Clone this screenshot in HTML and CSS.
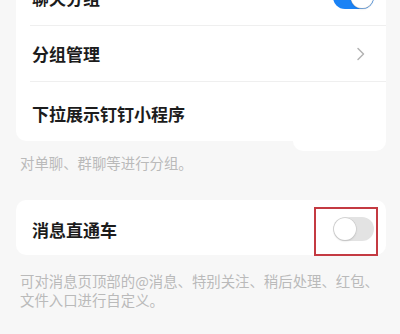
FILE: index.html
```html
<!DOCTYPE html>
<html lang="zh">
<head>
<meta charset="utf-8">
<link rel="stylesheet" href="styles.css">
</head>
<body>
<div class="page">
  <div class="card card-groups">
    <div class="row row-first">
      <span class="label">聊天分组</span>
      <span class="toggle toggle-on"><span class="knob"></span></span>
    </div>
    <div class="divider"></div>
    <div class="row row-mid">
      <span class="label">分组管理</span>
      <svg class="chevron" width="10" height="14" viewBox="0 0 10 14"><path d="M2 1.5 L7.5 7 L2 12.5" fill="none" stroke="#b3b3b3" stroke-width="1.5" stroke-linecap="round" stroke-linejoin="round"/></svg>
    </div>
    <div class="divider"></div>
    <div class="row row-last">
      <span class="label">下拉展示钉钉小程序</span>
    </div>
  </div>
  <p class="caption caption-first">对单聊、群聊等进行分组。</p>
  <div class="card card-direct">
    <div class="row row-single">
      <span class="label">消息直通车</span>
      <span class="highlight"><span class="toggle toggle-off"><span class="knob"></span></span></span>
    </div>
  </div>
  <p class="caption caption-second">可对消息页顶部的@消息、特别关注、稍后处理、红包、<br>文件入口进行自定义。</p>
</div>
</body>
</html>
```
FILE: styles.css
```css
html, body {
  margin: 0;
  padding: 0;
  background: #f7f7f7;
}
body {
  width: 400px;
  height: 334px;
  overflow: hidden;
  font-family: "Noto Sans CJK SC", "Noto Sans", sans-serif;
}
.page {
  display: flex;
  flex-direction: column;
}
.card {
  background: #ffffff;
  border-radius: 10px;
  margin: 0 14px 0 16px;
  position: relative;
}
.card-groups {
  margin-top: -31px;
}
.card-groups::after {
  content: "";
  position: absolute;
  left: 277px;
  right: 0;
  bottom: -10px;
  height: 20px;
  background: #ffffff;
  border-radius: 0 0 10px 10px;
}
.row {
  display: flex;
  align-items: center;
  justify-content: space-between;
  padding: 0 12px 0 16px;
  box-sizing: border-box;
}
.row-first { height: 56px; }
.row-mid { height: 55px; padding-right: 20px; }
.row-last { height: 59px; padding-top: 4px; }
.row-single { height: 55px; padding-top: 3px; }
.label {
  font-size: 17px;
  font-weight: 700;
  color: #1c1c1c;
  letter-spacing: 0;
}
.divider {
  height: 1px;
  background: #efefef;
  margin-left: 14px;
}
.chevron {
  display: block;
}
.toggle {
  display: flex;
  align-items: center;
  width: 41px;
  height: 24px;
  border-radius: 12px;
  box-sizing: border-box;
  padding: 1px;
}
.toggle-on {
  background: #1a82f5;
  justify-content: flex-end;
}
.toggle-off {
  background: #e3e3e3;
  justify-content: flex-start;
}
.knob {
  width: 22px;
  height: 22px;
  border-radius: 50%;
  background: #ffffff;
  box-shadow: 0 0 0 0.5px #c8c8c8, 0 1px 2px rgba(0,0,0,0.18);
}
.highlight {
  position: relative;
  display: block;
}
.highlight::after {
  content: "";
  position: absolute;
  left: -19px;
  right: -4px;
  top: -10px;
  bottom: -15px;
  border: 2px solid #c43a42;
}
.caption {
  margin: 0 20px;
  font-size: 14.4px;
  color: #bababa;
}
.caption-first {
  margin-top: 12px;
  margin-bottom: 27px;
  line-height: 20px;
}
.caption-second {
  margin-top: 16px;
  line-height: 19px;
}
```
